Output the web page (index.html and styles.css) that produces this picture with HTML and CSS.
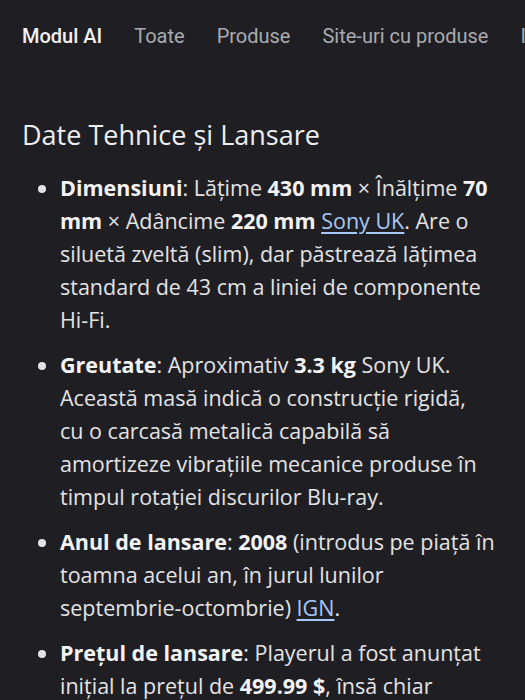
FILE: index.html
```html
<!DOCTYPE html>
<html lang="ro">
<head>
    <meta charset="UTF-8">
    <meta name="viewport" content="width=device-width, initial-scale=1.0">
    <title>Date Tehnice și Lansare</title>
    <link rel="stylesheet" href="styles.css">
</head>
<body>

    <!-- Search mode tabs -->
    <nav class="tabs">
        <span class="tab active">Modul AI</span>
        <span class="tab">Toate</span>
        <span class="tab">Produse</span>
        <span class="tab">Site-uri cu produse</span>
        <span class="tab">Imagini</span>
    </nav>

    <!-- Answer body -->
    <main class="answer">
        <h2>Date Tehnice și Lansare</h2>

        <ul class="facts">
            <li><b>Dimensiuni</b>: Lățime <b>430 mm</b> × Înălțime <b>70 mm</b> × Adâncime <b>220 mm</b> <a href="#">Sony UK</a>. Are o siluetă zveltă (slim), dar păstrează lățimea standard de 43 cm a liniei de componente Hi-Fi.</li>
            <li><b>Greutate</b>: Aproximativ <b>3.3 kg</b> Sony UK. Această masă indică o construcție rigidă, cu&nbsp;o carcasă metalică capabilă să amortizeze vibrațiile mecanice produse în timpul rotației discurilor Blu-ray.</li>
            <li><b>Anul de lansare</b>: <b>2008</b> (introdus pe piață în toamna acelui an, în jurul lunilor septembrie-octombrie) <a href="#">IGN</a>.</li>
            <li><b>Prețul de lansare</b>: Playerul a fost anunțat inițial la prețul de <b>499.99 $</b>, însă chiar după&nbsp;lansare a fost redus la 399.99 $.</li>
        </ul>
    </main>

</body>
</html>
```

FILE: styles.css
```css
/* Page */
body {
    margin: 0;
    background-color: #1f1f23;
    color: #e3e3e6;
    font-family: "Open Sans", Roboto, sans-serif;
    overflow: hidden;
}

/* Tabs row */
.tabs {
    display: flex;
    gap: 32px;
    padding: 24px 22px 0;
    white-space: nowrap;
    overflow: hidden;
    font-family: Roboto, sans-serif;
}

.tab {
    font-size: 20px;
    line-height: 24px;
    color: #a9abb1;
}

.tab.active {
    color: #f1f1f3;
    font-weight: 500;
}

/* Answer */
.answer {
    padding: 0 24px 0 22px;
}

.answer h2 {
    margin: 70px 0 19px;
    font-size: 27px;
    line-height: 34px;
    font-weight: 400;
    color: #eeeef0;
}

.facts {
    margin: 0;
    padding-left: 38px;
    font-size: 21.5px;
    line-height: 33px;
}

.facts li {
    margin-bottom: 12px;
}

.facts b {
    font-weight: 700;
    color: #f3f3f5;
}

.facts a {
    color: #a8c7fa;
    text-decoration: underline;
    text-underline-offset: 3px;
}
```
